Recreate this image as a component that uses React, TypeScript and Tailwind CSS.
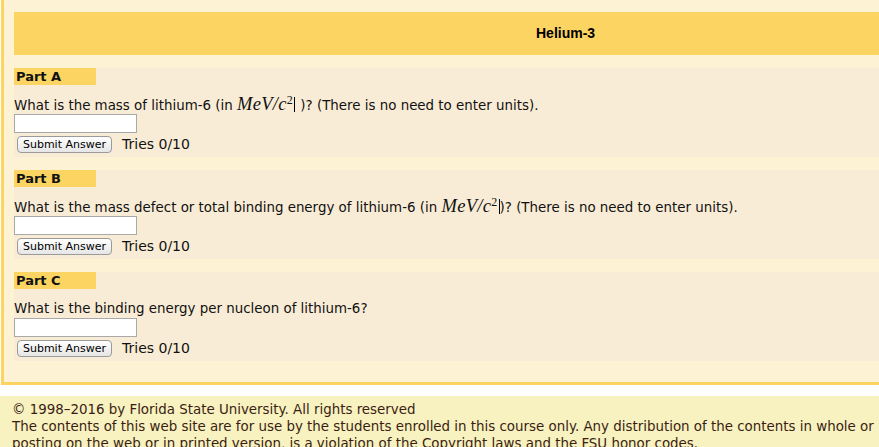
const parts = [
  {
    label: 'Part A',
    question: (
      <>
        What is the mass of lithium-6 (in <Mev gap /> )? (There is no need to enter units).
      </>
    ),
  },
  {
    label: 'Part B',
    question: (
      <>
        What is the mass defect or total binding energy of lithium-6 (in <Mev />)? (There is no need to
        enter units).
      </>
    ),
  },
  {
    label: 'Part C',
    question: <>What is the binding energy per nucleon of lithium-6?</>,
  },
];

function Mev({ gap }: { gap?: boolean }) {
  return (
    <span className="inline-flex items-baseline h-[19px]">
      <span className="font-['Liberation_Serif',serif] italic text-[18.5px] leading-none tracking-[0.3px]">
        MeV/c<sup className="text-[12px] not-italic leading-none">2</sup>
      </span>
      <span className={`inline-block w-px h-[15px] bg-black self-center ${gap ? 'ml-[1px] mr-[1px]' : 'ml-[1px]'}`} />
    </span>
  );
}

const Part = ({ label, question }: { label: string; question: React.ReactNode }) => (
  <div className="bg-[#f9ecd6] pb-[4px]">
    <div className="w-[82px] h-[17px] bg-[#fcd462] pl-[2px] font-bold leading-[17px]">{label}</div>
    <div className="mt-[10px] h-[19px] leading-[19px] whitespace-nowrap text-[13.4px]">{question}</div>
    <input className="block w-[123px] h-[19px] bg-white border border-[#a9a9a9] outline-none" />
    <div className="flex items-center mt-[3px]">
      <button className="ml-[3px] h-[17px] w-[95px] rounded-[4px] border border-[#9a9a9a] bg-gradient-to-b from-white to-[#e6e6e6] text-[11px] leading-[15px] text-black">
        Submit Answer
      </button>
      <span className="ml-[10px] text-[14px] leading-[17px]">Tries 0/10</span>
    </div>
  </div>
);

export default function App() {
  return (
    <div className="min-h-screen bg-white font-['DejaVu_Sans',Verdana,sans-serif] text-[13px] text-[#111] overflow-hidden">
      <div className="ml-px border-l-[3px] border-b-[3px] border-[#fcd462] bg-[#fdf2d3] pl-[10px] pt-[12px] pb-[21px]">
        <div className="h-[43px] bg-[#fcd462] flex items-center pl-[522px] font-['Liberation_Sans',Arial,sans-serif] font-bold text-[14px] text-black">
          Helium-3
        </div>
        <div className="mt-[13px] flex flex-col gap-[13px]">
          {parts.map((p) => (
            <Part key={p.label} label={p.label} question={p.question} />
          ))}
        </div>
      </div>
      <div className="mt-[11px] bg-[#f7f2bf] px-[12px] pt-[5px] pb-2 text-[#3b1d14] text-[13.4px] leading-[17px] whitespace-nowrap">
        © 1998–2016 by Florida State University. All rights reserved
        <br />
        The contents of this web site are for use by the students enrolled in this course only. Any distribution of the contents in whole or
        <br />
        posting on the web or in printed version, is a violation of the Copyright laws and the FSU honor codes.
      </div>
    </div>
  );
}
